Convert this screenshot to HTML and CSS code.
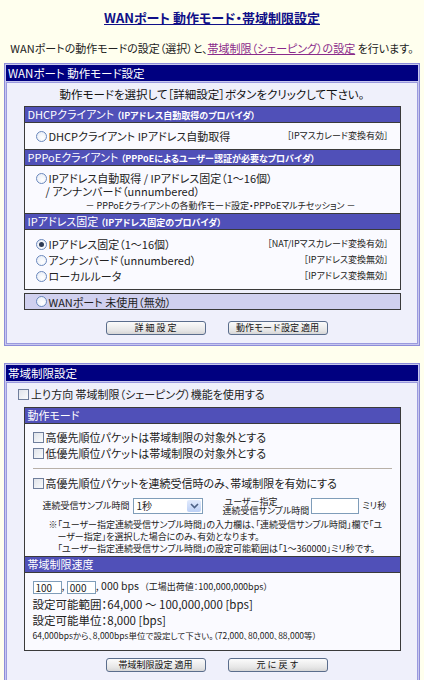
FILE: index.html
```html
<!DOCTYPE html>
<html lang="ja">
<head>
    <meta charset="UTF-8">
    <meta name="viewport" content="width=device-width, initial-scale=1.0">
    <title>WANポート 動作モード・帯域制限設定</title>
    <link rel="stylesheet" href="styles.css">
</head>
<body>
    <h1><a href="#">WANポート 動作モード・帯域制限設定</a></h1>
    <p class="intro">WANポートの動作モードの設定（選択）と、<a href="#shaping" class="visited">帯域制限（シェーピング）の設定</a> を行います。</p>

    <div class="panel">
        <div class="panel-head">WANポート 動作モード設定</div>
        <div class="panel-body mode-body">
            <p class="lead">動作モードを選択して［詳細設定］ボタンをクリックして下さい。</p>

            <div class="box">
                <div class="box-head first">DHCPクライアント <small>（IPアドレス自動取得のプロバイダ）</small></div>
                <div class="box-body dhcp">
                    <div class="opt">
                        <span class="radio"></span>DHCPクライアント IPアドレス自動取得
                        <span class="tag">［IPマスカレード変換有効］</span>
                    </div>
                </div>

                <div class="box-head">PPPoEクライアント <small>（PPPoEによるユーザー認証が必要なプロバイダ）</small></div>
                <div class="box-body pppoe">
                    <div class="line"><span class="radio"></span>IPアドレス自動取得 / IPアドレス固定（1〜16個）</div>
                    <div class="line indent">/ アンナンバード（unnumbered）</div>
                    <div class="sub">－ PPPoEクライアントの各動作モード設定・PPPoEマルチセッション －</div>
                </div>

                <div class="box-head">IPアドレス固定 <small>（IPアドレス固定のプロバイダ）</small></div>
                <div class="box-body fixed">
                    <div class="opt">
                        <span class="radio checked"></span>IPアドレス固定（1〜16個）
                        <span class="tag">［NAT/IPマスカレード変換有効］</span>
                    </div>
                    <div class="opt">
                        <span class="radio"></span>アンナンバード（unnumbered）
                        <span class="tag">［IPアドレス変換無効］</span>
                    </div>
                    <div class="opt">
                        <span class="radio"></span>ローカルルータ
                        <span class="tag">［IPアドレス変換無効］</span>
                    </div>
                </div>
            </div>

            <div class="box unused">
                <div class="opt"><span class="radio"></span>WANポート 未使用（無効）</div>
            </div>

            <div class="buttons">
                <button type="button">詳 細 設 定</button>
                <button type="button">動作モード設定 適用</button>
            </div>
        </div>
    </div>

    <div class="panel" id="shaping">
        <div class="panel-head">帯域制限設定</div>
        <div class="panel-body shape-body">
            <div class="check-row top"><span class="check"></span>上り方向 帯域制限（シェーピング）機能を使用する</div>

            <div class="box">
                <div class="box-head first">動作モード</div>
                <div class="box-body modes">
                    <div class="check-row"><span class="check"></span>高優先順位パケットは帯域制限の対象外とする</div>
                    <div class="check-row"><span class="check"></span>低優先順位パケットは帯域制限の対象外とする</div>
                    <div class="rule"></div>
                    <div class="check-row"><span class="check"></span>高優先順位パケットを連続受信時のみ、帯域制限を有効にする</div>

                    <div class="sample">
                        <span class="sample-label">連続受信サンプル時間</span>
                        <span class="select">1秒<span class="select-btn"><svg width="9" height="6" viewBox="0 0 9 6"><path d="M1 1 L4.5 4.5 L8 1" fill="none" stroke="#4d6185" stroke-width="1.6"/></svg></span></span>
                        <span class="user-label"><span>ユーザー指定</span><span>連続受信サンプル時間</span></span>
                        <span class="field wide"></span>
                        <span class="unit">ミリ秒</span>
                    </div>

                    <div class="notes">
                        <p>※「ユーザー指定連続受信サンプル時間」の入力欄は、「連続受信サンプル時間」欄で「ユ</p>
                        <p class="cont">ーザー指定」を選択した場合にのみ、有効となります。</p>
                        <p class="cont">「ユーザー指定連続受信サンプル時間」の設定可能範囲は「1〜360000」ミリ秒です。</p>
                    </div>
                </div>

                <div class="box-head">帯域制限速度</div>
                <div class="box-body speed">
                    <div class="rate">
                        <span class="field">100</span>, <span class="field">000</span>, 000 bps
                        <span class="factory">（工場出荷値：100,000,000bps）</span>
                    </div>
                    <div class="range first">設定可能範囲：64,000 〜 100,000,000 [bps]</div>
                    <div class="range">設定可能単位：8,000 [bps]</div>
                    <div class="hint">64,000bpsから、8,000bps単位で設定して下さい。（72,000、80,000、88,000等）</div>
                </div>
            </div>

            <div class="buttons">
                <button type="button">帯域制限設定 適用</button>
                <button type="button">元 に 戻 す</button>
            </div>
        </div>
    </div>
</body>
</html>
```

FILE: styles.css
```css
body {
    font-family: "Noto Sans CJK JP", "DejaVu Sans", sans-serif;
    font-size: 11px;
    line-height: 14px;
    font-feature-settings: "palt";
    color: #222;
    background-color: #ffffee;
    margin: 0;
    padding: 0 4px;
}
h1 {
    font-size: 13px;
    line-height: 16px;
    text-align: center;
    margin: 10px 0 0;
}
h1 a {
    color: #101088;
    text-decoration: underline;
}
.intro {
    text-align: center;
    font-size: 11px;
    line-height: 16px;
    margin: 14px 0 7px;
    white-space: nowrap;
}
.intro a {
    color: #8a2a8a;
}
.panel {
    border: 1px solid #8c8cd8;
    padding: 1px;
    background: #c8c8ee;
    margin-bottom: 17px;
}
.panel-head {
    background: #000080;
    color: #fff;
    font-size: 11.5px;
    height: 16px;
    line-height: 16px;
    padding-left: 2px;
}
.panel-body {
    border: 1px solid #9a9ade;
    margin-top: 1px;
    background: #eff0fb;
}
.mode-body {
    padding: 4px 0 8px;
}
.shape-body {
    padding: 3px 0 8px;
}
.lead {
    text-align: center;
    font-size: 11.5px;
    margin: 0 0 5px;
    line-height: 14px;
    color: #111;
}
.box {
    width: 375px;
    margin: 0 auto;
    border: 1px solid #3a3a3a;
    background: #fafaff;
}
.box-head {
    background: #5050b8;
    color: #fff;
    height: 15px;
    line-height: 15px;
    padding-left: 3px;
    border-top: 1px solid #3a3a3a;
    white-space: nowrap;
}
.box-head.first {
    border-top: none;
}
.box-head small {
    font-size: 9px;
    font-weight: bold;
}
.box-body {
    border-top: 1px solid #3a3a3a;
}
.opt {
    display: flex;
    align-items: center;
    height: 16px;
    padding: 0 11px;
}
.tag {
    margin-left: auto;
    font-size: 9px;
}
.dhcp {
    padding: 5px 0 5px;
}
.pppoe {
    padding: 6px 0 1px 11px;
}
.pppoe .line {
    display: flex;
    align-items: center;
    height: 13px;
    line-height: 13px;
}
.pppoe .indent {
    padding-left: 10px;
}
.pppoe .sub {
    font-size: 9px;
    line-height: 12px;
    margin-top: 2px;
    padding-left: 50px;
}
.fixed {
    padding: 6px 0 5px;
}
.radio {
    display: inline-block;
    width: 9px;
    height: 9px;
    border: 1px solid #6a88bd;
    border-radius: 50%;
    background: radial-gradient(circle at 60% 65%, #ffffff, #e3e9f4);
    margin-right: 2px;
    position: relative;
    flex: none;
}
.radio.checked::after {
    content: "";
    position: absolute;
    left: 2px;
    top: 2px;
    width: 5px;
    height: 5px;
    border-radius: 50%;
    background: #2d3a55;
}
.unused {
    margin-top: 3px;
    background: #d0d0ef;
}
.unused .opt {
    height: 15px;
}
.buttons {
    display: flex;
    justify-content: center;
    gap: 22px;
    margin-top: 11px;
    padding-left: 9px;
}
.shape-body .buttons {
    margin-top: 7px;
}
button {
    width: 100px;
    height: 14px;
    font-family: inherit;
    font-size: 9px;
    line-height: 12px;
    padding: 0;
    border: 1px solid #5a6d8c;
    border-radius: 3px;
    background: linear-gradient(#fbfbfb, #e6e6e6 70%, #d6d6d6);
    color: #111;
}
.check {
    display: inline-block;
    width: 9px;
    height: 9px;
    border: 1px solid #6f7e9c;
    background: linear-gradient(135deg, #dfe3ea, #fafbfd);
    margin-right: 2px;
    flex: none;
}
.check-row {
    display: flex;
    align-items: center;
    height: 16px;
}
.check-row.top {
    padding-left: 11px;
    margin-bottom: 5px;
}
.modes {
    padding: 5px 8px 1px;
}
.rule {
    border-top: 1px solid #b8b0a8;
    margin: 7px 0 6px;
}
.sample {
    display: flex;
    align-items: center;
    height: 16px;
    margin-top: 7px;
    padding-left: 10px;
    font-size: 9px;
    white-space: nowrap;
}
.sample-label {
    margin-right: 4px;
}
.select {
    display: inline-flex;
    align-items: center;
    justify-content: space-between;
    width: 66px;
    height: 14px;
    border: 1px solid #7f9db9;
    background: #fff;
    font-size: 10px;
    padding-left: 2px;
}
.select-btn {
    width: 14px;
    height: 12px;
    margin-right: 1px;
    background: linear-gradient(#e2ebfd, #bcd0f6);
    border-radius: 2px;
    display: flex;
    align-items: center;
    justify-content: center;
}
.user-label {
    display: flex;
    flex-direction: column;
    line-height: 9px;
    margin-left: 19px;
    margin-right: 2px;
}
.user-label span:first-child {
    padding-left: 2px;
}
.field {
    display: inline-block;
    width: 25px;
    height: 11px;
    line-height: 11px;
    border: 1px solid #7f9db9;
    background: #fff;
    font-size: 10px;
    padding-left: 2px;
    vertical-align: middle;
}
.field.wide {
    width: 44px;
    height: 14px;
}
.unit {
    margin-left: 3px;
}
.notes {
    margin-top: 5px;
    padding-left: 16px;
    font-size: 9px;
}
.notes p {
    margin: 0;
    line-height: 12px;
    white-space: nowrap;
}
.notes .cont {
    padding-left: 9px;
}
.speed {
    padding: 6px 8px 8px;
}
.rate {
    height: 14px;
    line-height: 14px;
    font-size: 10.5px;
}
.factory {
    font-size: 9px;
    margin-left: 3px;
}
.range {
    line-height: 16px;
    font-size: 11.5px;
}
.range.first {
    margin-top: 3px;
}
.hint {
    font-size: 8.5px;
    line-height: 14px;
    white-space: nowrap;
}
```
